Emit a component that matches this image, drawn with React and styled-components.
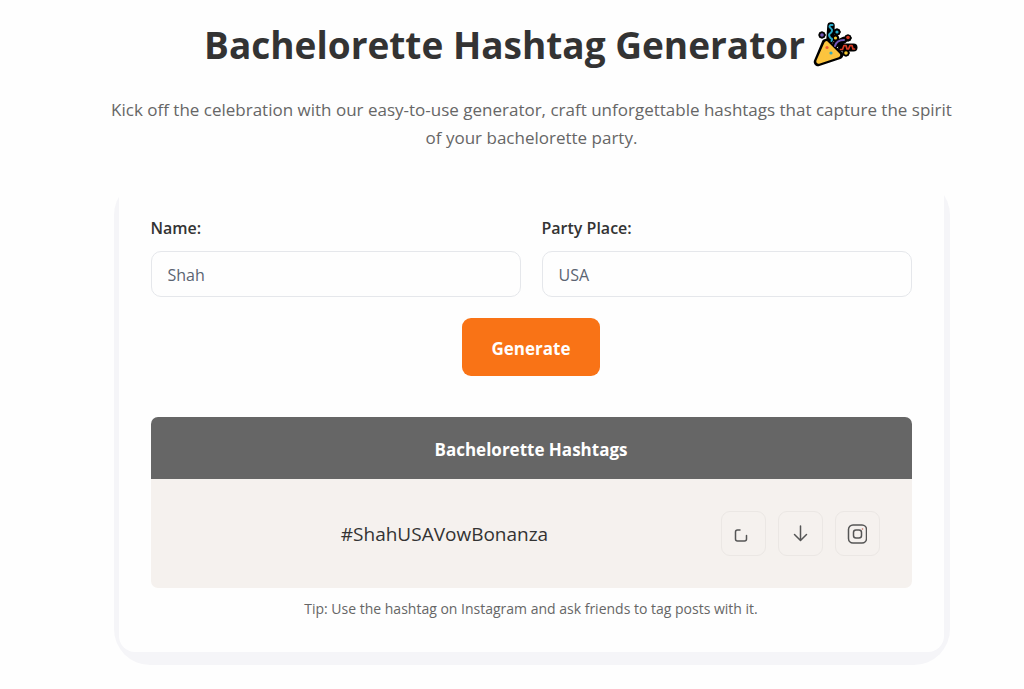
import React, {useState} from 'react';
import styled, {createGlobalStyle} from 'styled-components';

const GlobalStyle = createGlobalStyle`
  * {
    box-sizing: border-box;
  }
  body {
    margin: 0;
    background: #fefefe;
    color: #333;
    font-family: "Open Sans", "Noto Sans", sans-serif;
  }
  button, input {
    font-family: inherit;
  }
`

const Page = styled.main`
  padding: 16px 0 24px 39px;
`

const Header = styled.header`
  max-width: 856px;
  margin: 0 auto;
  text-align: center;
`

const Title = styled.h1`
  display: flex;
  align-items: center;
  justify-content: center;
  gap: 8px;
  margin: 0;
  font-size: 37px;
  line-height: 58px;
  font-weight: 700;
`

const Intro = styled.p`
  margin: 22px 0 0;
  font-size: 17px;
  line-height: 28px;
  color: #666;
`

const CardShell = styled.section`
  max-width: 836px;
  margin: 27px auto 0;
  padding: 0 6px 13px 5px;
  border-radius: 36px;
  background: #f5f5f8;
`

const Card = styled.div`
  padding: 36px 32px 31px;
  border-radius: 16px;
  background: #fefefe;
`

const Form = styled.form`
  display: grid;
  grid-template-columns: 1fr 1fr;
  gap: 21px;
`

const Field = styled.label`
  display: flex;
  flex-direction: column;
  gap: 9px;
  font-size: 16px;
  line-height: 27px;
  font-weight: 600;
`

const TextInput = styled.input`
  width: 100%;
  height: 46px;
  padding: 2px 16px 0;
  border: 1px solid #e5e7eb;
  border-radius: 10px;
  outline: none;
  background: #fefefe;
  color: #5b6472;
  font-size: 16px;
`

const GenerateButton = styled.button`
  grid-column: 1 / -1;
  justify-self: center;
  height: 58px;
  padding: 2px 30px 0;
  border: 0;
  border-radius: 9px;
  background: #f97316;
  color: #fff;
  font-size: 17px;
  font-weight: 700;
  cursor: pointer;
`

const Results = styled.table`
  width: 100%;
  margin-top: 41px;
  border-spacing: 0;
`

const ResultsHead = styled.th`
  height: 62px;
  padding: 2px 32px 0;
  border-radius: 7px 7px 0 0;
  background: #666;
  color: #fff;
  font-size: 17px;
  font-weight: 700;
`

const ResultsCell = styled.td`
  height: 109px;
  padding: 0 32px;
  border-radius: 0 0 7px 7px;
  background: #f5f1ee;
`

const ResultRow = styled.div`
  display: flex;
  align-items: center;
  gap: 14px;
`

const Hashtag = styled.span`
  flex: 1;
  text-align: center;
  font-size: 19px;
  line-height: 28px;
`

const Actions = styled.div`
  display: flex;
  gap: 12px;
`

const IconButton = styled.button`
  display: flex;
  align-items: center;
  justify-content: center;
  width: 45px;
  height: 45px;
  padding: 0;
  border: 1px solid #ebe7e4;
  border-radius: 9px;
  background: transparent;
  color: #555;
  cursor: pointer;
`

const Tip = styled.p`
  margin: 9px 0 0;
  text-align: center;
  font-size: 14px;
  line-height: 24px;
  color: #666;
`

const PartyPopper = () => (
    <svg width="46" height="46" viewBox="0 0 46 46" fill="none" strokeLinecap="round" strokeLinejoin="round" aria-hidden="true">
        <g stroke="#000" fill="#000">
            <path d="M13 21L5 40L26 33Z" strokeWidth="8.500"/>
            <path d="M18 4L17 18" strokeWidth="7.500"/>
            <path d="M23 22L31 18" strokeWidth="6.500"/>
            <path d="M29 25.500H40.500" strokeWidth="8"/>
            <circle cx="9" cy="13" r="3.200"/>
            <circle cx="24" cy="10" r="3.200"/>
            <circle cx="35" cy="16" r="3.200"/>
            <circle cx="33" cy="31" r="3.200"/>
            <circle cx="22.500" cy="16" r="3.200"/>
        </g>
        <path d="M13.500 21.500L5.500 39.500L25 33Z" fill="#fcc43e" stroke="#fcc43e" strokeWidth="4.500"/>
        <path d="M19.500 3h-2q-2 1.500 0 3t1.500 3-2 2.500-.5 3 2 2 0 2.500" stroke="#28a9c9" strokeWidth="2"/>
        <path d="M22 24c1-4 5-6 9-6" stroke="#7458b8" strokeWidth="2"/>
        <path d="M27.500 27.500h2l1.500-4h2l1 3.500h1.500l1.500-3.500h2l1 3.500h1.500" stroke="#d93b24" strokeWidth="1.700"/>
        <circle cx="9" cy="13" r="1.800" fill="#7458b8"/>
        <circle cx="24" cy="10" r="1.600" fill="#28a9c9"/>
        <circle cx="22.500" cy="16" r="1.600" fill="#f3c832"/>
        <circle cx="35" cy="15.500" r="1.800" fill="#d93b24"/>
        <circle cx="33" cy="31" r="1.800" fill="#f3c832"/>
        <circle cx="14" cy="25.500" r="1.600" fill="#ed5935"/>
        <circle cx="18" cy="31" r="1.600" fill="#35aabc"/>
    </svg>
)

const CopyIcon = () => (
    <svg width="20" height="20" viewBox="0 0 20 20" fill="none" stroke="currentColor" strokeWidth="1.500" strokeLinecap="round">
        <path d="M7 6H4.500Q2.500 6 2.500 8V15Q2.500 17 4.500 17H11.500Q13.500 17 13.500 15V11.500"/>
    </svg>
)

const DownloadIcon = () => (
    <svg width="20" height="20" viewBox="0 0 20 20" fill="none" stroke="currentColor" strokeWidth="1.500" strokeLinecap="round" strokeLinejoin="round">
        <path d="M10.500 2V16M4.500 10.500L10.500 16.500L16.500 10.500"/>
    </svg>
)

const InstagramIcon = () => (
    <svg width="20" height="20" viewBox="0 0 20 20" fill="none" stroke="currentColor" strokeWidth="1.500">
        <rect x="1.500" y="1" width="18" height="18" rx="4.500"/>
        <rect x="6.500" y="6" width="8" height="8" rx="2.500"/>
        <circle cx="15.500" cy="5" r="0.800" fill="#c86e62" stroke="none"/>
    </svg>
)

const App = () => {
    const [name, setName] = useState('Shah');
    const [place, setPlace] = useState('USA');
    const [hashtag, setHashtag] = useState('#ShahUSAVowBonanza');

    const generate = (e) => {
        e.preventDefault();
        setHashtag(`#${name}${place}VowBonanza`.replace(/\s+/g, ''));
    }

    return (
        <Page>
            <GlobalStyle/>
            <Header>
                <Title>Bachelorette Hashtag Generator <PartyPopper/></Title>
                <Intro>
                    Kick off the celebration with our easy-to-use generator, craft unforgettable hashtags that capture the spirit of your bachelorette party.
                </Intro>
            </Header>
            <CardShell>
                <Card>
                    <Form onSubmit={generate}>
                        <Field>
                            Name:
                            <TextInput value={name} onChange={e => setName(e.target.value)}/>
                        </Field>
                        <Field>
                            Party Place:
                            <TextInput value={place} onChange={e => setPlace(e.target.value)}/>
                        </Field>
                        <GenerateButton type="submit">Generate</GenerateButton>
                    </Form>
                    <Results>
                        <thead>
                            <tr>
                                <ResultsHead scope="col">Bachelorette Hashtags</ResultsHead>
                            </tr>
                        </thead>
                        <tbody>
                            <tr>
                                <ResultsCell>
                                    <ResultRow>
                                        <Hashtag>{hashtag}</Hashtag>
                                        <Actions>
                                            <IconButton type="button" aria-label="Copy"><CopyIcon/></IconButton>
                                            <IconButton type="button" aria-label="Download"><DownloadIcon/></IconButton>
                                            <IconButton type="button" aria-label="Share on Instagram"><InstagramIcon/></IconButton>
                                        </Actions>
                                    </ResultRow>
                                </ResultsCell>
                            </tr>
                        </tbody>
                    </Results>
                    <Tip>Tip: Use the hashtag on Instagram and ask friends to tag posts with it.</Tip>
                </Card>
            </CardShell>
        </Page>
    );
}

export default App;
